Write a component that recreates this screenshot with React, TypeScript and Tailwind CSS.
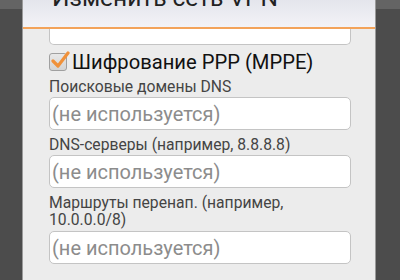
import React from "react";

function Field({ text }: { text: string }) {
  return (
    <div className="h-[33px] w-[302px] rounded-[5px] border border-[#c4c4c4] bg-white pl-[2px] flex items-center">
      <span className="text-[20px] leading-none text-[#8c8c8c]">{text}</span>
    </div>
  );
}

export default function App() {
  return (
    <div
      className="w-[400px] h-[280px] overflow-hidden flex bg-[linear-gradient(to_bottom,#646464_0px,#646464_9px,#4c4c4c_9px,#4c4c4c_100%)]"
      style={{ fontFamily: "Roboto, 'Noto Sans', sans-serif" }}
    >
      <div className="ml-[22px] w-[354px] h-[280px] flex flex-col border-l border-r border-[#9a9a9a]">
        <div className="h-[27px] overflow-hidden bg-[linear-gradient(to_bottom,#e4e5ec,#f3f3f7)] pl-[29px]">
          <div className="text-[24.5px] leading-[24px] mt-[-14px] text-[#222]">Изменить сеть VPN</div>
        </div>
        <div className="h-[2px] bg-[#f3a35a]" />
        <div className="flex-1 bg-[#ececec] pl-[26px] flex flex-col">
          <div className="h-[16px] w-[302px] rounded-b-[5px] border border-t-0 border-[#c4c4c4] bg-white" />
          <div className="mt-[2px] h-[30px] flex items-center">
            <div className="relative w-[18px] h-[18px] mr-[5px]">
              <div className="absolute inset-0 rounded-[3px] border border-[#a0a0a0] bg-[linear-gradient(to_bottom,#e8e8e8,#d4d4d4)]" />
              <svg className="absolute left-[1px] top-[-3px]" width="20" height="20" viewBox="0 0 20 20">
                <path d="M3 11 L8 16 L18 3" fill="none" stroke="#f0913a" strokeWidth="3.2" strokeLinecap="round" strokeLinejoin="round" />
              </svg>
            </div>
            <span className="text-[20.2px] leading-none text-[#111]">Шифрование PPP (MPPE)</span>
          </div>
          <div className="mt-[1px] text-[15.7px] leading-[18px] text-[#444]">Поисковые домены DNS</div>
          <div className="mt-[1px]"><Field text="(не используется)" /></div>
          <div className="mt-[6px] text-[15.7px] leading-[18px] text-[#444]">DNS-серверы (например, 8.8.8.8)</div>
          <div className="mt-[1px]"><Field text="(не используется)" /></div>
          <div className="mt-[6px] text-[15.7px] leading-[17px] text-[#444]">
            Маршруты перенап. (например,
            <br />
            10.0.0.0/8)
          </div>
          <div className="mt-[3px]"><Field text="(не используется)" /></div>
        </div>
      </div>
    </div>
  );
}
